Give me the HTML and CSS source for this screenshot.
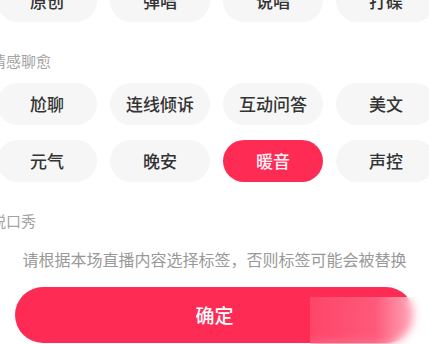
FILE: index.html
```html
<!DOCTYPE html>
<html lang="zh">
<head>
    <meta charset="UTF-8">
    <meta name="viewport" content="width=device-width, initial-scale=1.0">
    <title>选择标签</title>
    <link rel="stylesheet" href="styles.css">
</head>
<body>

<div class="panel">
    <div class="tags first">
        <div class="tag">原创</div>
        <div class="tag">弹唱</div>
        <div class="tag">说唱</div>
        <div class="tag">打碟</div>
    </div>

    <div class="group-title">情感聊愈</div>
    <div class="tags">
        <div class="tag">尬聊</div>
        <div class="tag">连线倾诉</div>
        <div class="tag">互动问答</div>
        <div class="tag">美文</div>
        <div class="tag">元气</div>
        <div class="tag">晚安</div>
        <div class="tag active">暖音</div>
        <div class="tag">声控</div>
    </div>

    <div class="group-title">脱口秀</div>

    <p class="hint">请根据本场直播内容选择标签，否则标签可能会被替换</p>

    <div class="confirm">确定</div>
</div>

<div class="watermark"></div>

</body>
</html>
```

FILE: styles.css
```css
body {
    margin: 0;
    background-color: #ffffff;
    font-family: "Noto Sans CJK SC", "Noto Sans", sans-serif;
    overflow: hidden;
    width: 429px;
    height: 344px;
    position: relative;
}

.panel {
    margin-left: -3px;
}

.tags {
    display: grid;
    grid-template-columns: repeat(4, 100px);
    column-gap: 13px;
    row-gap: 15px;
}

.tags.first {
    margin-top: -20px;
}

.tag {
    height: 42px;
    border-radius: 21px;
    background-color: #f6f6f6;
    color: #333;
    font-size: 17px;
    font-weight: 500;
    line-height: 42px;
    text-align: center;
}

.tag.active {
    background-color: #fe2c55;
    color: #fff2f5;
}

.group-title {
    margin: 29px 0 12px -6px;
    font-size: 15px;
    line-height: 20px;
    color: #a3a3a3;
}

.hint {
    margin: 18px 0 18px 3px;
    width: 429px;
    font-size: 16px;
    line-height: 20px;
    color: #999;
    text-align: center;
}

.confirm {
    margin-left: 18px;
    width: 399px;
    height: 56px;
    border-radius: 28px;
    background-color: #fe2c55;
    color: #fff;
    font-size: 19px;
    font-weight: 500;
    line-height: 56px;
    text-align: center;
}

/* faded stamp in the corner */
.watermark {
    position: absolute;
    left: 310px;
    top: 297px;
    width: 119px;
    height: 47px;
    backdrop-filter: blur(4px);
    background: linear-gradient(to right, rgba(255, 255, 255, 0.12), rgba(255, 255, 255, 0.22) 55%, rgba(255, 255, 255, 0.75));
}
```
